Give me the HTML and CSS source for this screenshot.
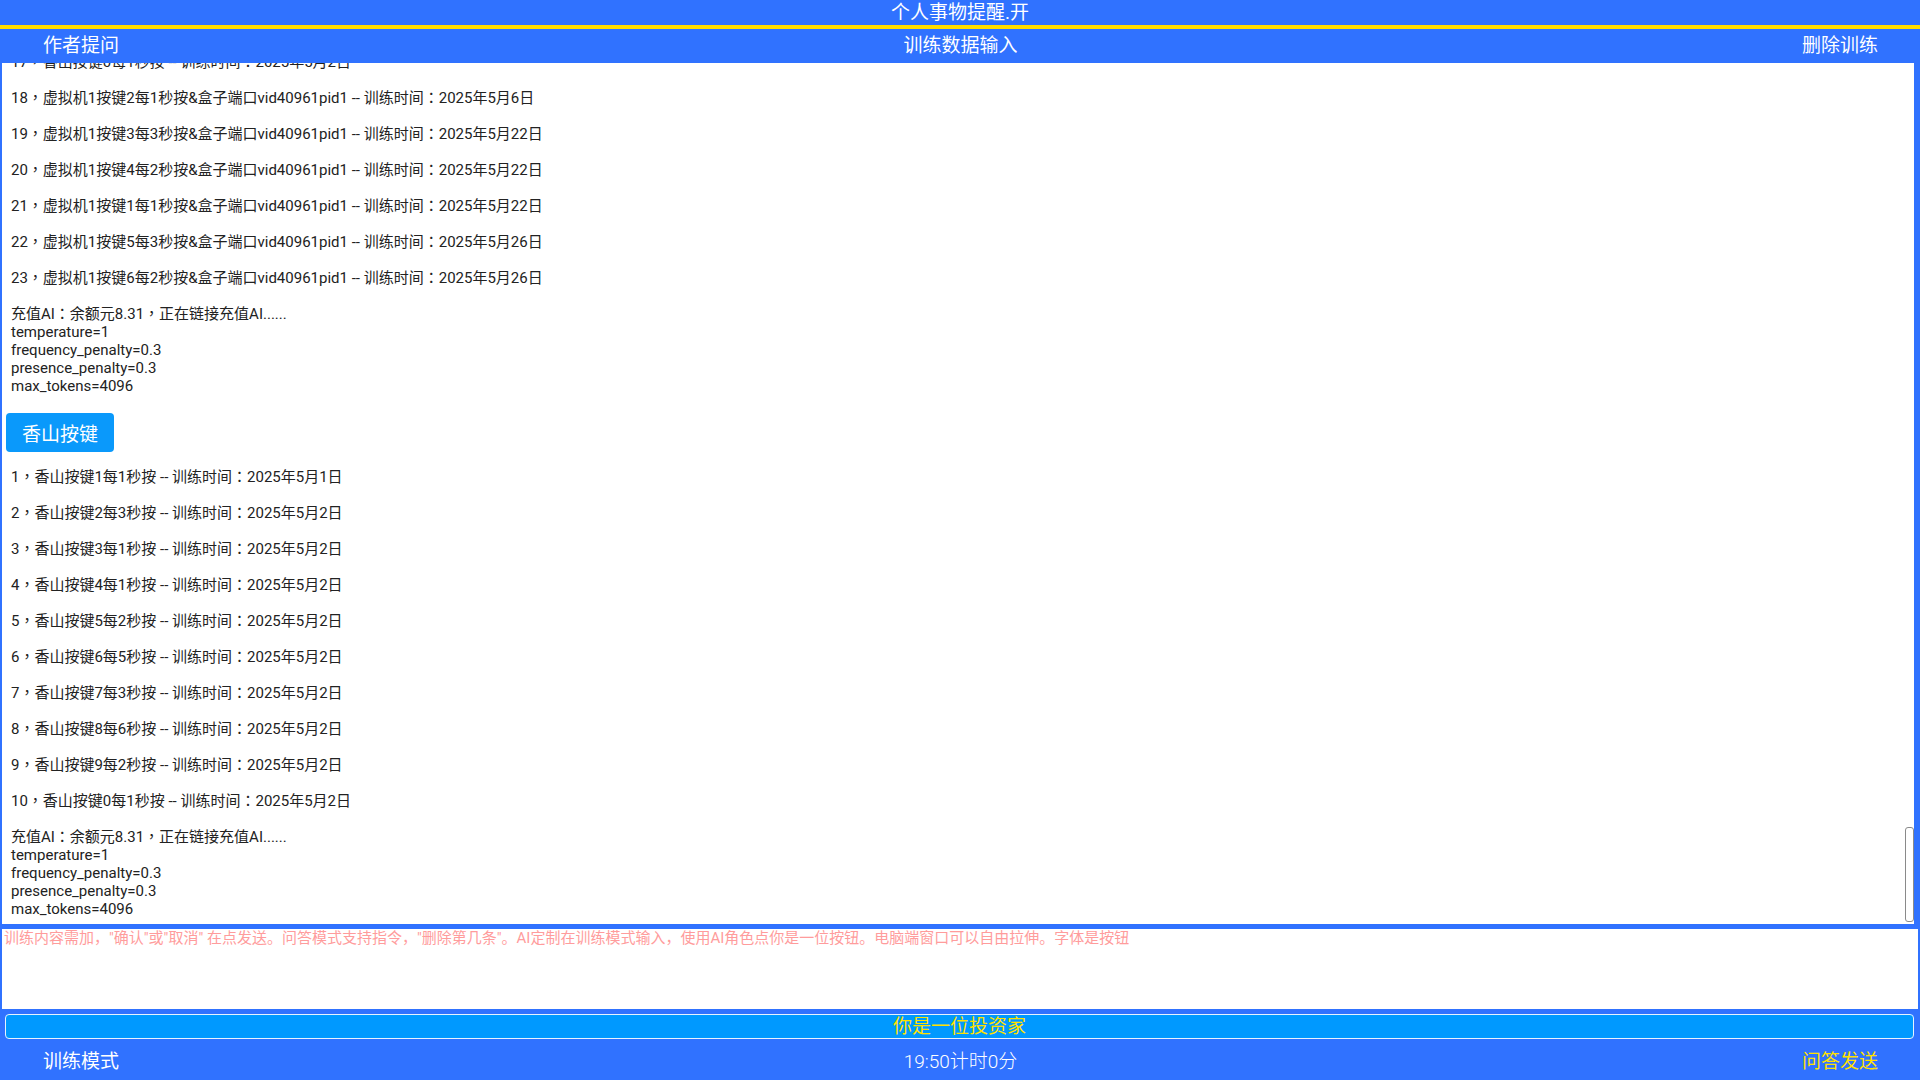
FILE: index.html
```html
<!DOCTYPE html>
<html lang="zh-CN">
<head>
    <meta charset="UTF-8">
    <meta name="viewport" content="width=device-width, initial-scale=1.0">
    <title>个人事物提醒</title>
    <link rel="stylesheet" href="styles.css">
</head>
<body>
    <div class="app">
        <div class="title">个人事物提醒.开</div>
        <div class="header">
            <span class="side-left">作者提问</span>
            <span>训练数据输入</span>
            <span class="side-right">删除训练</span>
        </div>

        <div class="log" lang="zh-TW">
            <div class="log-body">
                <p class="entry">17，香山按键0每1秒按 -- 训练时间：2025年5月2日</p>
                <p class="entry">18，虚拟机1按键2每1秒按&amp;盒子端口vid40961pid1 -- 训练时间：2025年5月6日</p>
                <p class="entry">19，虚拟机1按键3每3秒按&amp;盒子端口vid40961pid1 -- 训练时间：2025年5月22日</p>
                <p class="entry">20，虚拟机1按键4每2秒按&amp;盒子端口vid40961pid1 -- 训练时间：2025年5月22日</p>
                <p class="entry">21，虚拟机1按键1每1秒按&amp;盒子端口vid40961pid1 -- 训练时间：2025年5月22日</p>
                <p class="entry">22，虚拟机1按键5每3秒按&amp;盒子端口vid40961pid1 -- 训练时间：2025年5月26日</p>
                <p class="entry">23，虚拟机1按键6每2秒按&amp;盒子端口vid40961pid1 -- 训练时间：2025年5月26日</p>
                <p class="entry">充值AI：余额元8.31，正在链接充值AI......<br>temperature=1<br>frequency_penalty=0.3<br>presence_penalty=0.3<br>max_tokens=4096</p>

                <button class="tag">香山按键</button>

                <p class="entry">1，香山按键1每1秒按 -- 训练时间：2025年5月1日</p>
                <p class="entry">2，香山按键2每3秒按 -- 训练时间：2025年5月2日</p>
                <p class="entry">3，香山按键3每1秒按 -- 训练时间：2025年5月2日</p>
                <p class="entry">4，香山按键4每1秒按 -- 训练时间：2025年5月2日</p>
                <p class="entry">5，香山按键5每2秒按 -- 训练时间：2025年5月2日</p>
                <p class="entry">6，香山按键6每5秒按 -- 训练时间：2025年5月2日</p>
                <p class="entry">7，香山按键7每3秒按 -- 训练时间：2025年5月2日</p>
                <p class="entry">8，香山按键8每6秒按 -- 训练时间：2025年5月2日</p>
                <p class="entry">9，香山按键9每2秒按 -- 训练时间：2025年5月2日</p>
                <p class="entry">10，香山按键0每1秒按 -- 训练时间：2025年5月2日</p>
                <p class="entry">充值AI：余额元8.31，正在链接充值AI......<br>temperature=1<br>frequency_penalty=0.3<br>presence_penalty=0.3<br>max_tokens=4096</p>
            </div>
            <div class="scroll-thumb"></div>
        </div>

        <div class="input-box">
            <textarea placeholder='训练内容需加，"确认"或"取消" 在点发送。问答模式支持指令，"删除第几条"。AI定制在训练模式输入，使用AI角色点你是一位按钮。电脑端窗口可以自由拉伸。字体是按钮'></textarea>
        </div>

        <div class="role-bar">
            <button class="role">你是一位投资家</button>
        </div>

        <div class="footer">
            <span class="side-left">训练模式</span>
            <span class="timer">19:50计时0分</span>
            <span class="side-right send">问答发送</span>
        </div>
    </div>
</body>
</html>
```

FILE: styles.css
```css
body {
    margin: 0;
    background-color: #3072ff;
    font-family: Roboto, "Noto Sans CJK SC", sans-serif;
    overflow: hidden;
}
.app {
    height: 100vh;
    display: flex;
    flex-direction: column;
}
.title {
    height: 25px;
    line-height: 26px;
    text-align: center;
    color: #fff;
    font-size: 19px;
    border-bottom: 4px solid #ffdc00;
}
.header,
.footer {
    display: grid;
    grid-template-columns: 1fr auto 1fr;
    align-items: center;
    padding: 0 42px 0 43px;
    color: #fff;
    font-size: 19px;
}
.header {
    height: 34px;
    line-height: 32px;
}
.footer {
    height: 41px;
}
.side-left {
    justify-self: start;
}
.side-right {
    justify-self: end;
}
.timer {
    font-weight: 300;
}
.send {
    color: #ffe100;
}

/* message log, pinned to the newest entry */
.log {
    flex: 1;
    position: relative;
    display: flex;
    flex-direction: column;
    justify-content: flex-end;
    overflow: hidden;
    margin: 0 6px 0 2px;
    padding: 0 9px 6px 9px;
    background-color: #fff;
    color: #222;
    font-family: Roboto, "Noto Sans CJK TC", sans-serif;
    font-size: 15px;
    line-height: 18px;
}
.log-body {
    display: flex;
    flex-direction: column;
    align-items: flex-start;
}
.entry {
    margin: 0 0 18px 0;
    white-space: nowrap;
}
.entry:last-child {
    margin-bottom: 0;
}
.tag {
    height: 39px;
    margin: 0 0 16px -5px;
    padding: 0 16px;
    border: none;
    border-radius: 4px;
    background-color: #0a99fb;
    color: #fff;
    font-family: Roboto, "Noto Sans CJK SC", sans-serif;
    font-size: 19px;
}
.scroll-thumb {
    position: absolute;
    right: 0;
    bottom: 2px;
    width: 7px;
    height: 93px;
    border: 1px solid #8a8a8a;
    border-radius: 3px;
    background-color: #fff;
}

.input-box {
    height: 80px;
    margin: 5px 2px 0 2px;
    background-color: #fff;
}
.input-box textarea {
    width: 100%;
    height: 100%;
    box-sizing: border-box;
    margin: 0;
    padding: 0 2px;
    border: none;
    outline: none;
    resize: none;
    font-family: inherit;
    font-size: 15px;
    line-height: 18px;
}
.input-box textarea::placeholder {
    color: #ff9c9c;
}

.role-bar {
    padding: 5px 6px 0 5px;
}
.role {
    width: 100%;
    height: 25px;
    padding: 0;
    border: 1px solid #e6f2ff;
    border-radius: 4px;
    background-color: #0099ff;
    color: #ffe100;
    font-family: inherit;
    font-size: 19px;
    line-height: 23px;
}
```
